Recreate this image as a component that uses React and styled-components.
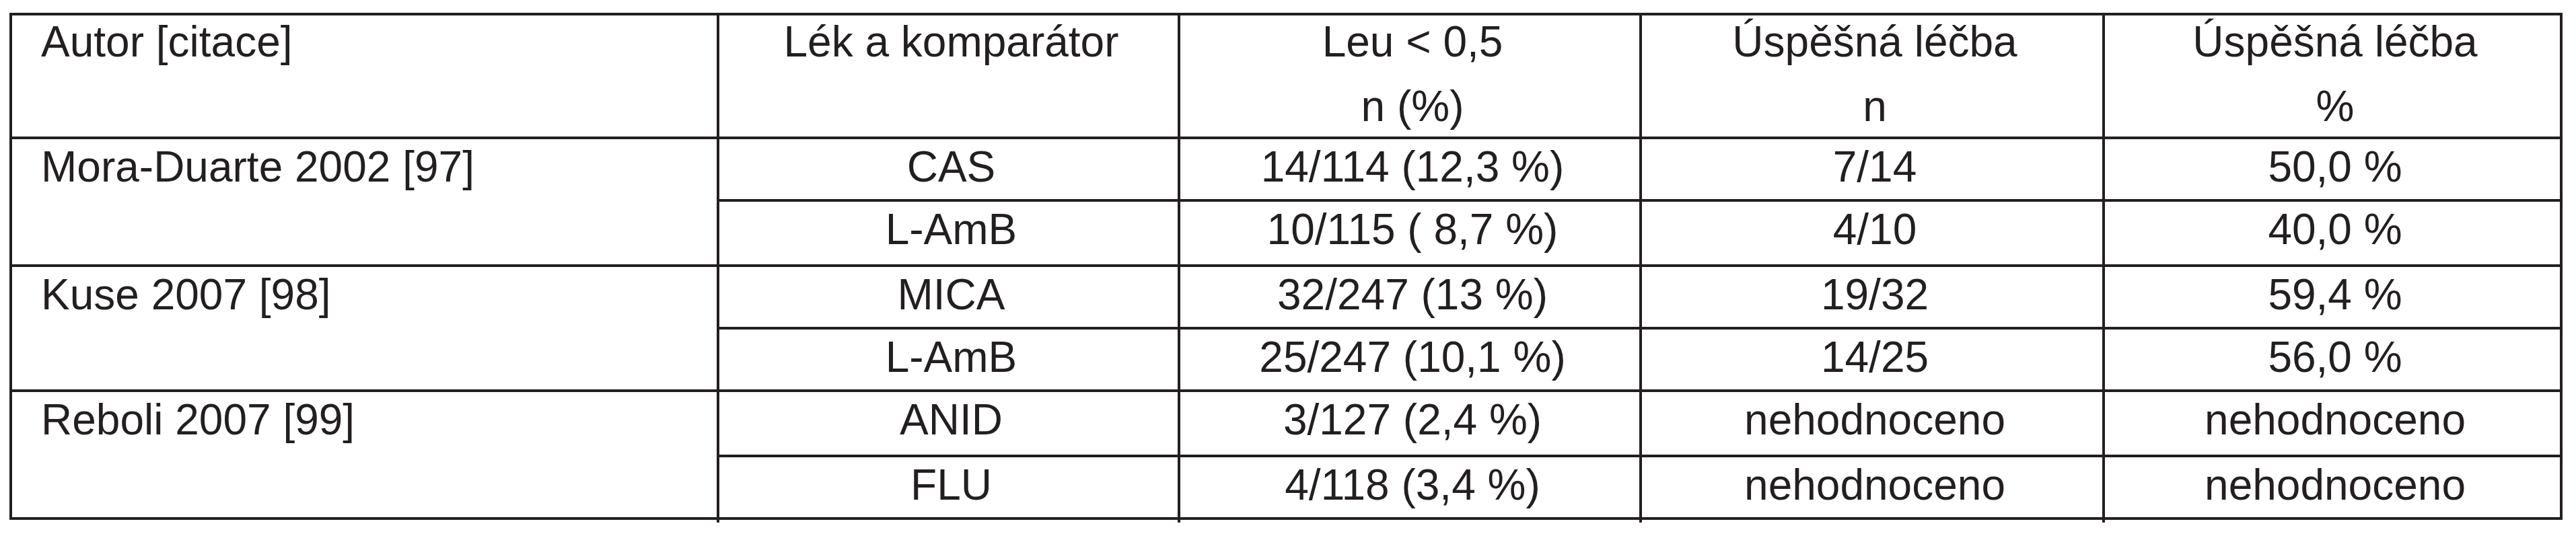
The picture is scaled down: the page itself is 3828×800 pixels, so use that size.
import React from "react";
import styled, { createGlobalStyle } from "styled-components";

const GlobalStyle = createGlobalStyle`
  html, body {
    margin: 0;
    padding: 0;
    background: #ffffff;
  }
  body {
    font-family: "Liberation Sans", Arial, Helvetica, sans-serif;
  }
`;

const INK = "#231f20";
const COLUMNS = "1047px 681px 682px 684px 676px";

const Page = styled.div`
  padding: 19px 0 0 14px;
  width: 3814px;
  height: 781px;
  box-sizing: border-box;
`;

const Grid = styled.div`
  display: grid;
  grid-template-columns: ${COLUMNS};
  grid-template-rows: 180px 89px 93px 89px 89px 93px 89px;
  gap: 4px;
  padding: 4px;
  width: 3794px;
  box-sizing: border-box;
  background: ${INK};
  font-size: 64px;
  color: ${INK};
`;

const Cell = styled.div`
  background: #ffffff;
  box-sizing: border-box;
  display: flex;
  flex-direction: column;
  align-items: ${(p) => (p.$left ? "flex-start" : "center")};
  padding: ${(p) => (p.$left ? "4px 0 0 43px" : "4px 0 0 8px")};
  line-height: normal;
  white-space: pre;
  grid-row: ${(p) => (p.$span ? `span ${p.$span}` : "auto")};
`;

const HeadCell = styled(Cell)`
  padding-top: 2px;
  gap: 21.5px;
`;

const Line = styled.span`
  display: block;
`;

const Tail = styled.div`
  display: grid;
  grid-template-columns: ${COLUMNS};
  column-gap: 4px;
  margin: 0 4px;
  width: 3786px;
  height: 4px;
  background: ${INK};
`;

const TailCell = styled.div`
  background: #ffffff;
`;

const header = [
  { lines: ["Autor [citace]"], left: true },
  { lines: ["Lék a komparátor"] },
  { lines: ["Leu < 0,5", "n (%)"] },
  { lines: ["Úspěšná léčba", "n"] },
  { lines: ["Úspěšná léčba", "%"] },
];

const groups = [
  {
    author: "Mora-Duarte 2002 [97]",
    rows: [
      ["CAS", "14/114 (12,3 %)", "7/14", "50,0 %"],
      ["L-AmB", "10/115 ( 8,7 %)", "4/10", "40,0 %"],
    ],
  },
  {
    author: "Kuse 2007 [98]",
    rows: [
      ["MICA", "32/247 (13 %)", "19/32", "59,4 %"],
      ["L-AmB", "25/247 (10,1 %)", "14/25", "56,0 %"],
    ],
  },
  {
    author: "Reboli 2007 [99]",
    rows: [
      ["ANID", "3/127 (2,4 %)", "nehodnoceno", "nehodnoceno"],
      ["FLU", "4/118 (3,4 %)", "nehodnoceno", "nehodnoceno"],
    ],
  },
];

export default function App() {
  return (
    <>
      <GlobalStyle />
      <Page>
        <Grid>
          {header.map((h, i) => (
            <HeadCell key={`h${i}`} $left={h.left}>
              {h.lines.map((l, j) => (
                <Line key={j}>{l}</Line>
              ))}
            </HeadCell>
          ))}
          {groups.map((g, gi) => (
            <React.Fragment key={`g${gi}`}>
              <Cell $left $span={g.rows.length}>
                <Line>{g.author}</Line>
              </Cell>
              {g.rows.map((r, ri) =>
                r.map((v, ci) => (
                  <Cell key={`c${gi}-${ri}-${ci}`}>
                    <Line>{v}</Line>
                  </Cell>
                ))
              )}
            </React.Fragment>
          ))}
        </Grid>
        <Tail>
          {header.map((_, i) => (
            <TailCell key={`t${i}`} />
          ))}
        </Tail>
      </Page>
    </>
  );
}
